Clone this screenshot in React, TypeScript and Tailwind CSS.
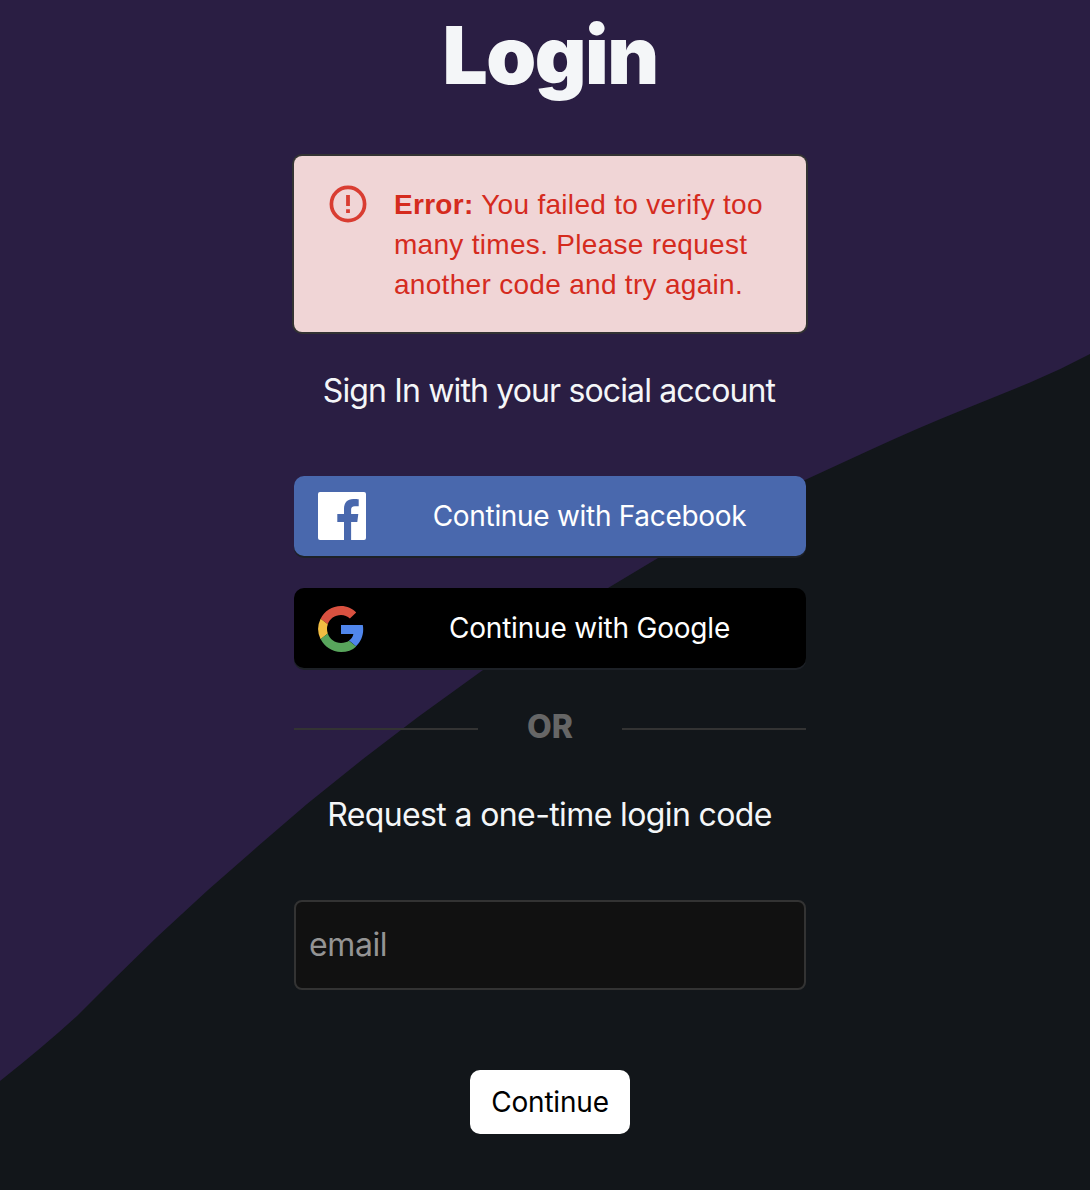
import React from "react";

function Backdrop() {
  return (
    <svg className="absolute inset-0 h-full w-full" viewBox="0 0 1090 1190" preserveAspectRatio="none" aria-hidden="true">
      <path
        fill="#2a1e43"
        d="M0 0H1090V354Q1060 370 1030 382.5L960 411Q920 427 870 450L806 479.500Q735 514 658 558L608 588Q545 627 483 670L418 717L363 759L307 804L257 847L208 890L157 937L110 983L77 1016Q43 1047 0 1081Z"
      />
    </svg>
  );
}

function ErrorIcon() {
  return (
    <svg className="mt-[27px] ml-[34px] h-10 w-10 shrink-0" viewBox="0 0 40 40" fill="none" aria-hidden="true">
      <circle cx="20" cy="21" r="16.600" stroke="#d93d32" strokeWidth="3.700" />
      <path d="M18.100 12h3.800v11h-3.800zM18.100 26.300h3.800v3.800h-3.800z" fill="#d93d32" />
    </svg>
  );
}

function FacebookIcon() {
  return (
    <svg className="h-12 w-12" viewBox="0 0 48 48" aria-hidden="true">
      <path
        fill="#fff"
        d="M2 0H46A2 2 0 0 1 48 2V46A2 2 0 0 1 46 48H33.120V29.900H39.300L40.300 22H33.120V18.080C33.120 15.500 34 14.300 36.900 14.300H40.700V7.300C39.900 7.200 37.700 7 35.200 7C29.500 7 26 10.400 26 17V22H19.300V29.900H26V48H2A2 2 0 0 1 0 46V2A2 2 0 0 1 2 0Z"
      />
    </svg>
  );
}

function GoogleIcon() {
  return (
    <svg className="mt-0.5 h-[46px] w-[46px]" viewBox="0 0 46 46" aria-hidden="true">
      <path fill="#d95140" d="M23 9.100c3.500 0 6.500 1.200 8.900 3.500l6.300-6.200C34.400 2.700 29.100 0 23 0 14.100 0 6.400 5.100 2.600 12.700l7.200 5.600C11.600 13 16.800 9.100 23 9.100Z" />
      <path fill="#5086ec" d="M45.200 23.500c0-1.600-.1-3-.4-4.400H23v8.800h12.400c-.5 2.800-2.100 5.100-4.400 6.700l7 5.600c4.600-4.200 7.200-10.300 7.200-16.700Z" />
      <path fill="#f2bd42" d="M9.800 27.500a13.900 13.900 0 0 1 0-9.200l-7.200-5.600a23.100 23.100 0 0 0 0 20.500l7.200-5.700Z" />
      <path fill="#58a55c" d="M23 46c6.200 0 11.400-2 15.200-5.600l-7.200-5.700c-2 1.300-4.700 2.200-8 2.200-6.200 0-11.400-4.100-13.200-9.500l-7.200 5.700C6.400 40.800 14.100 46 23 46Z" />
    </svg>
  );
}

function SocialButton({ icon, children, className }: { icon: React.ReactNode; children: React.ReactNode; className: string }) {
  return (
    <button className={"flex h-20 w-full items-center rounded-[10px] pl-6 text-[28px] leading-none text-white shadow-[0_2px_0_#1d2127] " + className}>
      <span className="flex h-12 w-12 shrink-0 items-center">{icon}</span>
      <span className="flex-1 whitespace-nowrap pl-[7px] text-center">{children}</span>
    </button>
  );
}

export default function App() {
  return (
    <main className="relative h-[1190px] w-[1090px] overflow-hidden bg-[#12161a] font-['Inter',sans-serif]">
      <Backdrop />
      <div className="relative ml-[294px] flex w-[512px] flex-col items-center">
        <h1 className="mt-[10px] h-[146px] whitespace-nowrap text-[80px] leading-[90px] font-black tracking-[-1.5px] text-[#f4f6f8]">Login</h1>
        <div className="flex h-44 w-full rounded-lg bg-[#f0d5d6] shadow-[0_0_0_2px_#333]">
          <ErrorIcon />
          <p className="mt-[29px] ml-[26px] font-['Liberation_Sans',sans-serif] text-[28px] leading-10 tracking-[0.300px] whitespace-nowrap text-[#d52b1e]">
            <b>Error:</b> You failed to verify too
            <br />
            many times. Please request
            <br />
            another code and try again.
          </p>
        </div>
        <p className="mt-[39px] -ml-0.5 whitespace-nowrap text-[32px] leading-10 tracking-[-0.860px] text-[#f4f6f8]">Sign In with your social account</p>
        <div className="mt-[65px] flex w-full flex-col gap-8">
          <SocialButton icon={<FacebookIcon />} className="bg-[#4968ad] tracking-[-0.300px]">Continue with Facebook</SocialButton>
          <SocialButton icon={<GoogleIcon />} className="bg-black tracking-[-0.200px]">Continue with Google</SocialButton>
        </div>
        <div className="mt-10 flex h-10 w-full items-center justify-between">
          <div className="mt-[2px] h-0.5 w-[184px] bg-[#333]" />
          <span className="mb-0.5 text-[32px] leading-10 font-extrabold text-[#666]">OR</span>
          <div className="mt-[2px] h-0.5 w-[184px] bg-[#333]" />
        </div>
        <p className="mt-[47px] -ml-px whitespace-nowrap text-[32px] leading-10 tracking-[-0.620px] text-[#f4f6f8]">Request a one-time login code</p>
        <input
          aria-label="email"
          placeholder="email"
          className="mt-[65px] h-[90px] w-full rounded-lg border-2 border-[#333] bg-[#111] pb-0.5 pl-[13px] text-[32px] tracking-[-0.400px] text-white outline-none placeholder:text-[#949494]"
        />
        <button className="mt-20 h-16 w-40 rounded-[10px] bg-white text-[28px] tracking-[-0.200px] text-black">Continue</button>
      </div>
    </main>
  );
}
